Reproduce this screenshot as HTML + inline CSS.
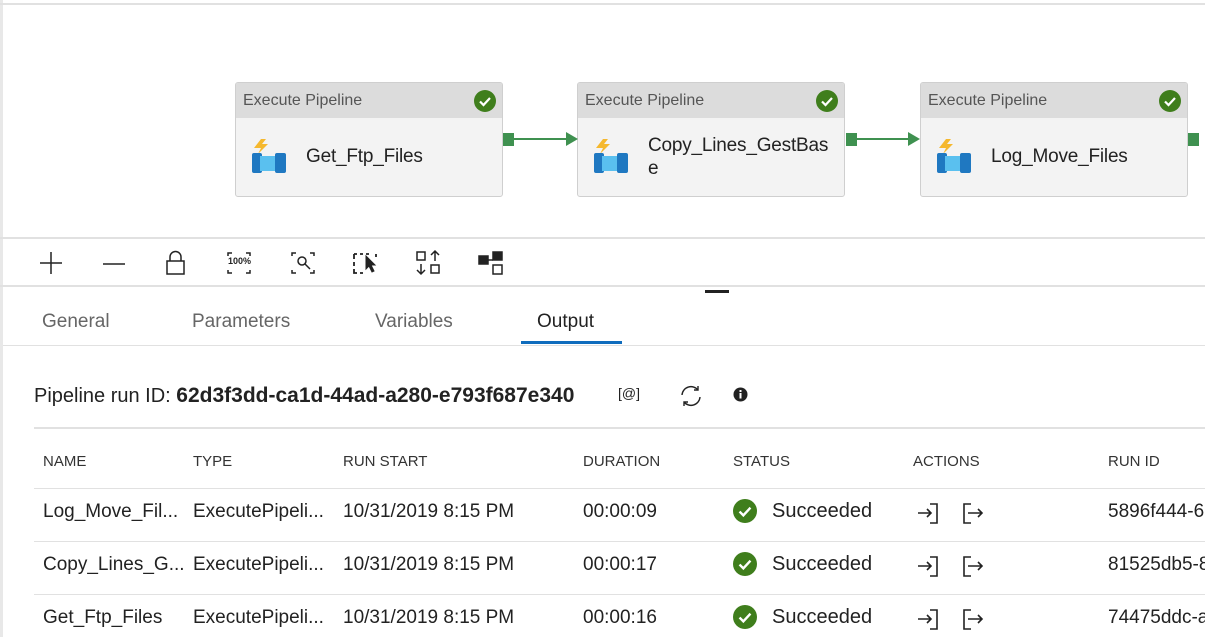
<!DOCTYPE html>
<html><head><meta charset="utf-8"><style>
body{margin:0;width:1205px;height:637px;overflow:hidden;background:#fff;font-family:"Liberation Sans",sans-serif;position:relative;color:#222}
.a{position:absolute;white-space:nowrap}
.hl{position:absolute;height:2px;background:#e1e1e1}
.box{position:absolute;width:266px;height:113px;border:1px solid #cfcfcf;border-radius:3px;background:#f3f3f3;top:82px;overflow:hidden}
.box .h{height:35px;background:#dcdcdc;font-size:16px;color:#555;line-height:36px;padding-left:7px}
.box .ck{position:absolute;right:6px;top:7px}
.box .t{position:absolute;left:70px;font-size:19px;color:#222;letter-spacing:-0.2px}
.box svg.pi{position:absolute;left:16px;top:56px}
.sq{position:absolute;width:11px;height:13px;background:#3f9150;top:133px}
.ln{position:absolute;height:2px;background:#3f9150;top:138px}
.ar{position:absolute;top:132px;width:0;height:0;border-top:7px solid transparent;border-bottom:7px solid transparent;border-left:12px solid #3f9150}
.th{font-size:15px;color:#333;top:453px}
.td{font-size:19px;color:#222}
</style></head><body>
<div class="a" style="left:0;top:0;width:3px;height:637px;background:#e8e8e8"></div>
<div class="hl" style="left:0;top:3px;width:1205px"></div>
<svg width="0" height="0" style="position:absolute"><defs>
<symbol id="pipe" viewBox="0 0 34 36"><path d="M9 0 L2 9 L9 9 L6 15 L16 5 L10 5 L14 0Z" fill="#f5b82e"/><rect x="0" y="14" width="10" height="20" rx="2" fill="#1f78c1"/><rect x="8" y="17" width="17" height="15" fill="#5ac0ef"/><rect x="23" y="14" width="11" height="20" rx="2" fill="#1f78c1"/></symbol>
<symbol id="ok" viewBox="0 0 22 22"><circle cx="11" cy="11" r="11" fill="#3f7e1c"/><path d="M6 11.5 L9.5 15 L16 8" stroke="#fff" stroke-width="2.2" fill="none"/></symbol>
</defs></svg>

<div class="box" style="left:235px"><div class="h">Execute Pipeline</div><svg class="ck" width="22" height="22"><use href="#ok"/></svg><svg class="pi" width="34" height="36"><use href="#pipe"/></svg><div class="t" style="top:63px">Get_Ftp_Files</div></div>
<div class="box" style="left:577px"><div class="h">Execute Pipeline</div><svg class="ck" width="22" height="22"><use href="#ok"/></svg><svg class="pi" width="34" height="36"><use href="#pipe"/></svg><div class="t" style="top:51px;line-height:23px">Copy_Lines_GestBas<br>e</div></div>
<div class="box" style="left:920px"><div class="h">Execute Pipeline</div><svg class="ck" width="22" height="22"><use href="#ok"/></svg><svg class="pi" width="34" height="36"><use href="#pipe"/></svg><div class="t" style="top:63px">Log_Move_Files</div></div>
<div class="sq" style="left:503px"></div><div class="ln" style="left:514px;width:54px"></div><div class="ar" style="left:566px"></div>
<div class="sq" style="left:846px"></div><div class="ln" style="left:857px;width:53px"></div><div class="ar" style="left:908px"></div>
<div class="sq" style="left:1188px"></div>

<div class="hl" style="left:0;top:237px;width:1205px"></div>
<svg class="a" style="left:0;top:240px" width="520" height="45" fill="none" stroke="#222" stroke-width="1.5">
<path d="M40 23h22M51 12v22"/>
<path d="M103 24h22"/>
<rect x="167" y="21" width="17" height="13"/><path d="M170 21v-4a5.5 5.5 0 0 1 11 0v4"/>
<path d="M228 16v-3h4M246 13h4v3M228 30v3h4M246 33h4v-3"/>
<path d="M292 16v-3h4M310 13h4v3M292 30v3h4M310 33h4v-3"/><circle cx="302" cy="21" r="4"/><path d="M305 24l5 5"/>
<path d="M354 14h3M360 14h3M366 14h3M354 14v5M354 22v4M354 29v4h3M360 33h3M376 14v3" stroke-width="1.8"/><path d="M366 16l0 13 3-3 3 6 2-1-3-6 4 0z" fill="#222" stroke-width="1"/>
<rect x="417" y="12" width="8" height="8"/><rect x="431" y="25" width="8" height="8"/><path d="M435 21v-9M431 15l4-4 4 4M421 24v9M417 30l4 4 4-4"/>
<rect x="479" y="16" width="9" height="8" fill="#222"/><rect x="493" y="12" width="9" height="8" fill="#222"/><rect x="493" y="25" width="9" height="9"/><path d="M488 20h5"/>
</svg>
<div class="a" style="left:228px;top:256px;font-size:9px;font-weight:bold;color:#222">100%</div>
<div class="hl" style="left:0;top:285px;width:1205px"></div>
<div class="a" style="left:705px;top:290px;width:24px;height:3px;background:#222"></div>

<div class="a" style="left:42px;top:311px;font-size:19px;color:#666">General</div>
<div class="a" style="left:192px;top:311px;font-size:19px;color:#666">Parameters</div>
<div class="a" style="left:375px;top:311px;font-size:19px;color:#666">Variables</div>
<div class="a" style="left:537px;top:311px;font-size:19px;color:#222">Output</div>
<div class="a" style="left:521px;top:341px;width:101px;height:3px;background:#0f6cbd"></div>
<div class="hl" style="left:3px;top:345px;width:1202px;height:1px"></div>

<div class="a" style="left:34px;top:384px;font-size:20px;color:#222">Pipeline run ID: <b style="font-size:21px">62d3f3dd-ca1d-44ad-a280-e793f687e340</b></div>
<div class="a" style="left:618px;top:385px;font-size:14px;color:#222">[@]</div>
<svg class="a" style="left:679px;top:384px" width="24" height="24" fill="none" stroke="#222" stroke-width="1.4"><path d="M3 11a9 9 0 0 1 16-5M21 13a9 9 0 0 1-16 5"/><path d="M19 2v4h-4M5 22v-4h4"/></svg>
<svg class="a" style="left:733px;top:387px" width="15" height="15"><circle cx="7.5" cy="7.5" r="7" fill="#222"/><rect x="6.5" y="6" width="2" height="5.5" fill="#fff"/><rect x="6.5" y="3" width="2" height="2" fill="#fff"/></svg>
<div class="hl" style="left:34px;top:427px;width:1171px"></div>

<div class="a th" style="left:43px">NAME</div>
<div class="a th" style="left:193px">TYPE</div>
<div class="a th" style="left:343px">RUN START</div>
<div class="a th" style="left:583px">DURATION</div>
<div class="a th" style="left:733px">STATUS</div>
<div class="a th" style="left:913px">ACTIONS</div>
<div class="a th" style="left:1108px">RUN ID</div>
<div class="hl" style="left:34px;top:488px;width:1171px;height:1px"></div>
<div class="hl" style="left:34px;top:541px;width:1171px;height:1px"></div>
<div class="hl" style="left:34px;top:594px;width:1171px;height:1px"></div>

<div class="a td" style="left:43px;top:501px">Log_Move_Fil...</div>
<div class="a td" style="left:193px;top:501px">ExecutePipeli...</div>
<div class="a td" style="left:343px;top:501px">10/31/2019 8:15 PM</div>
<div class="a td" style="left:583px;top:501px">00:00:09</div>
<div class="a td" style="left:772px;top:500px;font-size:20px">Succeeded</div>
<div class="a td" style="left:1108px;top:501px">5896f444-6</div>

<div class="a td" style="left:43px;top:554px">Copy_Lines_G...</div>
<div class="a td" style="left:193px;top:554px">ExecutePipeli...</div>
<div class="a td" style="left:343px;top:554px">10/31/2019 8:15 PM</div>
<div class="a td" style="left:583px;top:554px">00:00:17</div>
<div class="a td" style="left:772px;top:553px;font-size:20px">Succeeded</div>
<div class="a td" style="left:1108px;top:554px">81525db5-8</div>

<div class="a td" style="left:43px;top:607px">Get_Ftp_Files</div>
<div class="a td" style="left:193px;top:607px">ExecutePipeli...</div>
<div class="a td" style="left:343px;top:607px">10/31/2019 8:15 PM</div>
<div class="a td" style="left:583px;top:607px">00:00:16</div>
<div class="a td" style="left:772px;top:606px;font-size:20px">Succeeded</div>
<div class="a td" style="left:1108px;top:607px">74475ddc-a</div>

<svg class="a" style="left:0;top:495px" width="1000" height="142">
<g id="r"><use href="#ok" x="733" y="4" width="24" height="24"/>
<g fill="none" stroke="#222" stroke-width="1.6"><path d="M930 9h7v19h-7M918 18h13M927 14l4 4-4 4"/><path d="M971 9h-7v19h7M968 18h14M978 14l4 4-4 4"/></g></g>
<use href="#r" y="53"/><use href="#r" y="106"/>
</svg>
</body></html>
